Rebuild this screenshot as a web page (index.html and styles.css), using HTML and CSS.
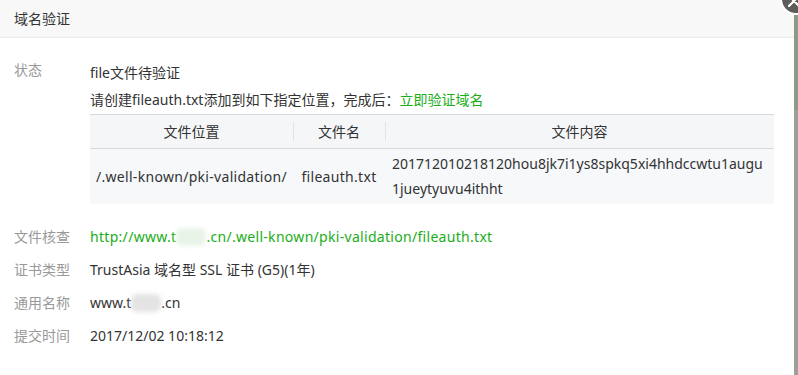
FILE: index.html
```html
<!DOCTYPE html>
<html lang="zh-CN">
<head>
    <meta charset="UTF-8">
    <meta name="viewport" content="width=device-width, initial-scale=1.0">
    <title>域名验证</title>
    <link rel="stylesheet" href="styles.css">
</head>
<body>

    <div class="dialog">
        <div class="dialog-hd">域名验证</div>
        <a class="dialog-close" href="#" aria-label="关闭">
            <svg width="12" height="12" viewBox="0 0 12 12">
                <path d="M1 1L11 11M11 1L1 11" stroke="#fff" stroke-width="2.2" stroke-linecap="round"/>
            </svg>
        </a>

        <div class="dialog-bd">
            <div class="row row-status">
                <div class="label">状态</div>
                <div class="value">
                    <p>file文件待验证</p>
                    <p class="tip">请创建fileauth.txt添加到如下指定位置，完成后：<a class="link" href="#">立即验证域名</a></p>
                    <table class="file-table">
                        <colgroup>
                            <col style="width: 203px">
                            <col style="width: 92px">
                            <col>
                        </colgroup>
                        <thead>
                            <tr>
                                <th>文件位置</th>
                                <th>文件名</th>
                                <th>文件内容</th>
                            </tr>
                        </thead>
                        <tbody>
                            <tr>
                                <td class="center wide">/.well-known/pki-validation/</td>
                                <td class="center wide">fileauth.txt</td>
                                <td class="content">201712010218120hou8jk7i1ys8spkq5xi4hhdccwtu1augu1jueytyuvu4ithht</td>
                            </tr>
                        </tbody>
                    </table>
                </div>
            </div>

            <div class="row">
                <div class="label">文件核查</div>
                <div class="value"><a class="link wide" href="#">http://www.t<span class="mask mask-green"></span>.cn/.well-known/pki-validation/fileauth.txt</a></div>
            </div>
            <div class="row">
                <div class="label">证书类型</div>
                <div class="value">TrustAsia 域名型 SSL 证书 (G5)(1年)</div>
            </div>
            <div class="row">
                <div class="label">通用名称</div>
                <div class="value">www.t<span class="mask mask-gray"></span>.cn</div>
            </div>
            <div class="row">
                <div class="label">提交时间</div>
                <div class="value">2017/12/02 10:18:12</div>
            </div>
        </div>
    </div>

</body>
</html>
```

FILE: styles.css
```css
* {
    margin: 0;
    padding: 0;
    box-sizing: border-box;
}

body {
    font-family: "Noto Sans", "Noto Sans CJK SC", sans-serif;
    font-size: 14px;
    color: #333;
    height: 100vh;
    overflow: hidden;
    background: linear-gradient(to bottom, #fff 0, #fff 12px, #8e9988 12px, #8e9988 110px, #9e9e9e 110px);
}

.dialog {
    position: relative;
    width: 794px;
    height: 100vh;
    background-color: #fff;
}

.dialog-hd {
    height: 38px;
    line-height: 37px;
    padding-left: 14px;
    background-color: #f8f8f8;
    border-bottom: 1px solid #eaeaea;
}

.dialog-close {
    position: absolute;
    left: 780px;
    top: -17px;
    width: 32px;
    height: 32px;
    border-radius: 50%;
    border: 2px solid #fff;
    background-color: #5c5c5c;
    display: flex;
    align-items: flex-end;
    justify-content: flex-start;
    padding: 0 0 6px 6px;
}

.dialog-bd {
    padding: 22px 20px 0 0;
}

.row {
    display: flex;
    line-height: 20px;
    margin-bottom: 13px;
}

.label {
    flex: 0 0 90px;
    padding-left: 14px;
    color: #999;
}

.value {
    flex: 1;
}

.row-status {
    margin-bottom: 23px;
}

.row-status .value {
    padding-top: 3px;
}

.tip {
    margin-top: 7px;
}

.link {
    color: #1aad19;
    text-decoration: none;
}

.wide {
    letter-spacing: 0.3px;
}

.mask {
    display: inline-block;
    width: 30px;
    height: 18px;
    vertical-align: -4px;
    border-radius: 6px;
    filter: blur(2px);
}

.mask-green {
    background-color: #e9f4e9;
}

.mask-gray {
    background-color: #e4e4e4;
}

.file-table {
    width: 684px;
    margin-top: 4px;
    border-collapse: collapse;
    table-layout: fixed;
}

.file-table th {
    position: relative;
    height: 34px;
    font-weight: normal;
    background-color: #f5f6f8;
    border-top: 1px solid #d6d9e0;
    border-bottom: 1px solid #d6d9e0;
}

.file-table th + th::before {
    content: "";
    position: absolute;
    left: 0;
    top: 7px;
    bottom: 7px;
    border-left: 1px solid #e1e3e8;
}

.file-table td {
    height: 55px;
    line-height: 25px;
    background-color: #f7f8fa;
    vertical-align: middle;
}

.file-table .center {
    text-align: center;
}

.file-table .content {
    padding: 0 7px;
    word-break: break-all;
}
```
